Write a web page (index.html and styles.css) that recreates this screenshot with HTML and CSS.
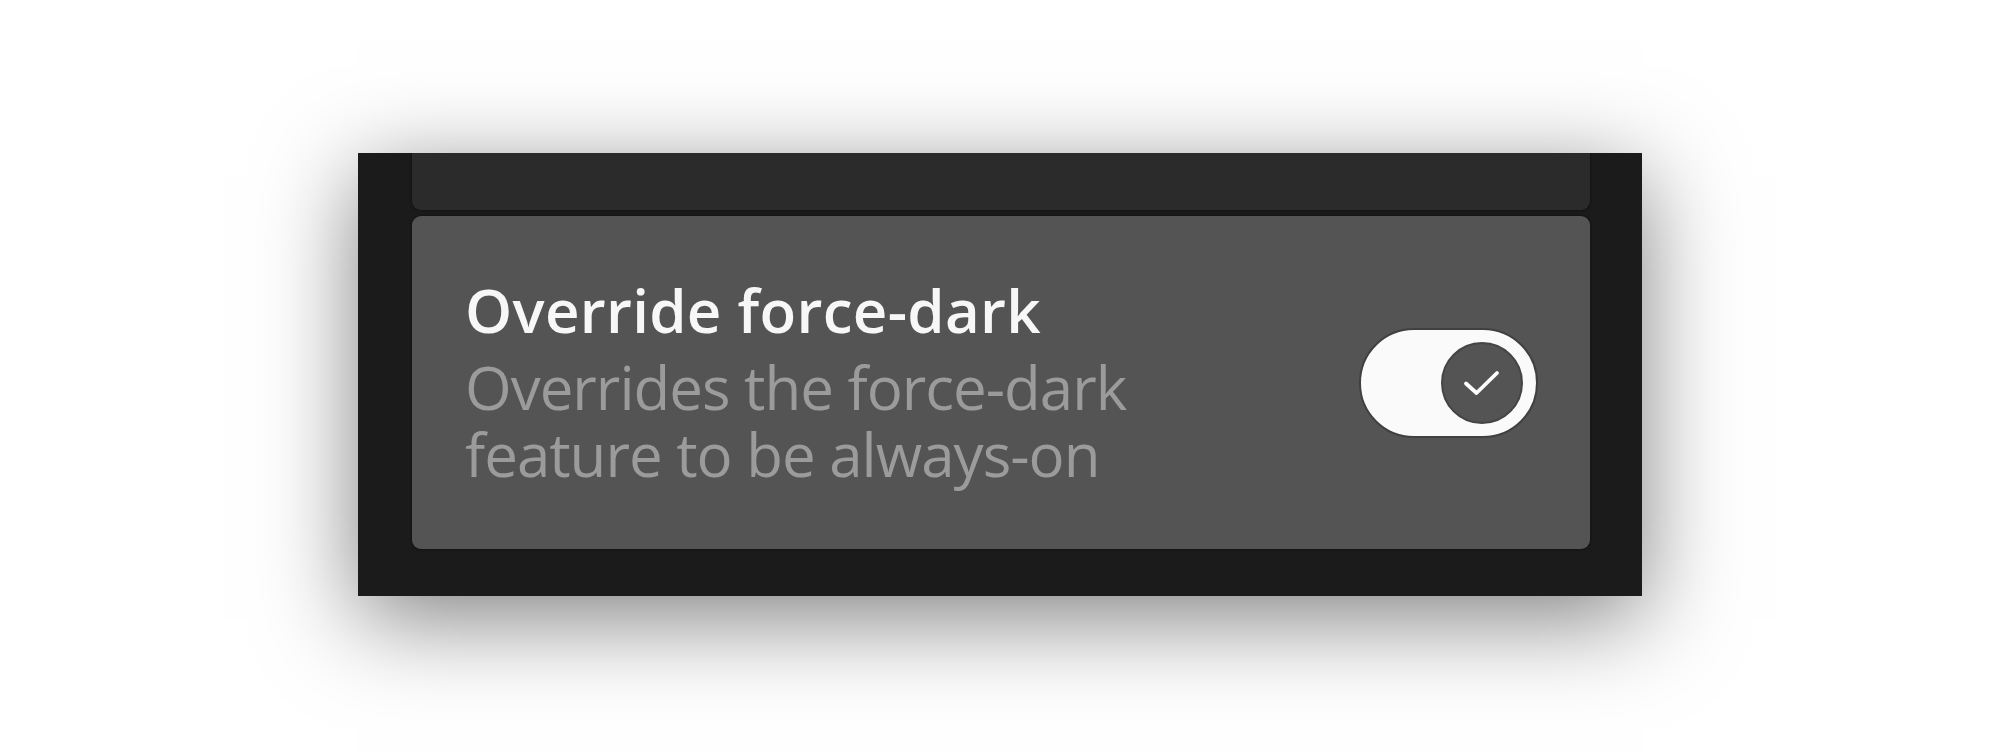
FILE: index.html
```html
<!DOCTYPE html>
<html lang="en">
<head>
<meta charset="utf-8">
<title>Override force-dark</title>
<link rel="stylesheet" href="styles.css">
</head>
<body>
  <div class="panel">
    <div class="card card-prev"></div>
    <div class="card card-setting">
      <div class="setting-text">
        <div class="setting-title">Override force-dark</div>
        <div class="setting-desc">Overrides the force-dark<br>feature to be always-on</div>
      </div>
      <div class="toggle" role="switch" aria-checked="true">
        <div class="thumb">
          <svg class="check" width="40" height="28" viewBox="0 0 40 28" aria-hidden="true">
            <path d="M4 14.5 L14.5 24 L35 4" fill="none" stroke="#ffffff" stroke-width="3.8" stroke-linecap="round" stroke-linejoin="round"/>
          </svg>
        </div>
      </div>
    </div>
  </div>
</body>
</html>
```

FILE: styles.css
```css
html, body {
  margin: 0;
  padding: 0;
  background: #ffffff;
}

body {
  min-height: 752px;
  box-sizing: border-box;
  padding-top: 153px;
  font-family: "Open Sans", "Noto Sans", sans-serif;
}

.panel {
  width: 1284px;
  height: 443px;
  margin: 0 auto;
  box-sizing: border-box;
  padding: 0 52px 0 54px;
  background: #1b1b1b;
  display: flex;
  flex-direction: column;
  gap: 6px;
  overflow: hidden;
  box-shadow: 0 22px 90px rgba(0, 0, 0, 0.5);
}

.card {
  box-shadow: 0 0 3px rgba(0, 0, 0, 0.55);
}

.card-prev {
  height: 57px;
  background: #2b2b2b;
  border-radius: 0 0 9px 9px;
  flex: none;
}

.card-setting {
  height: 333px;
  flex: none;
  background: #545454;
  border-radius: 9px;
  box-sizing: border-box;
  padding: 56px 52px 0 53px;
  display: flex;
  justify-content: space-between;
  align-items: flex-start;
}

.setting-title {
  color: #f7f7f7;
  font-size: 60px;
  font-weight: 600;
  letter-spacing: 0.3px;
  line-height: 76px;
  margin-bottom: 6px;
  white-space: nowrap;
}

.setting-desc {
  color: #9b9b9b;
  font-size: 60px;
  font-weight: 400;
  letter-spacing: -1px;
  line-height: 67px;
  white-space: nowrap;
}

.toggle {
  align-self: center;
  margin-top: -56px;
  width: 179px;
  height: 110px;
  box-sizing: border-box;
  border-radius: 55px;
  background: #fafafa;
  border: 2px solid #404040;
  display: flex;
  align-items: center;
  justify-content: flex-end;
  padding-right: 13px;
}

.thumb {
  width: 82px;
  height: 82px;
  box-sizing: border-box;
  border-radius: 50%;
  background: #545454;
  border: 2px solid #454545;
  display: flex;
  align-items: center;
  justify-content: center;
}

.check {
  display: block;
}
```
